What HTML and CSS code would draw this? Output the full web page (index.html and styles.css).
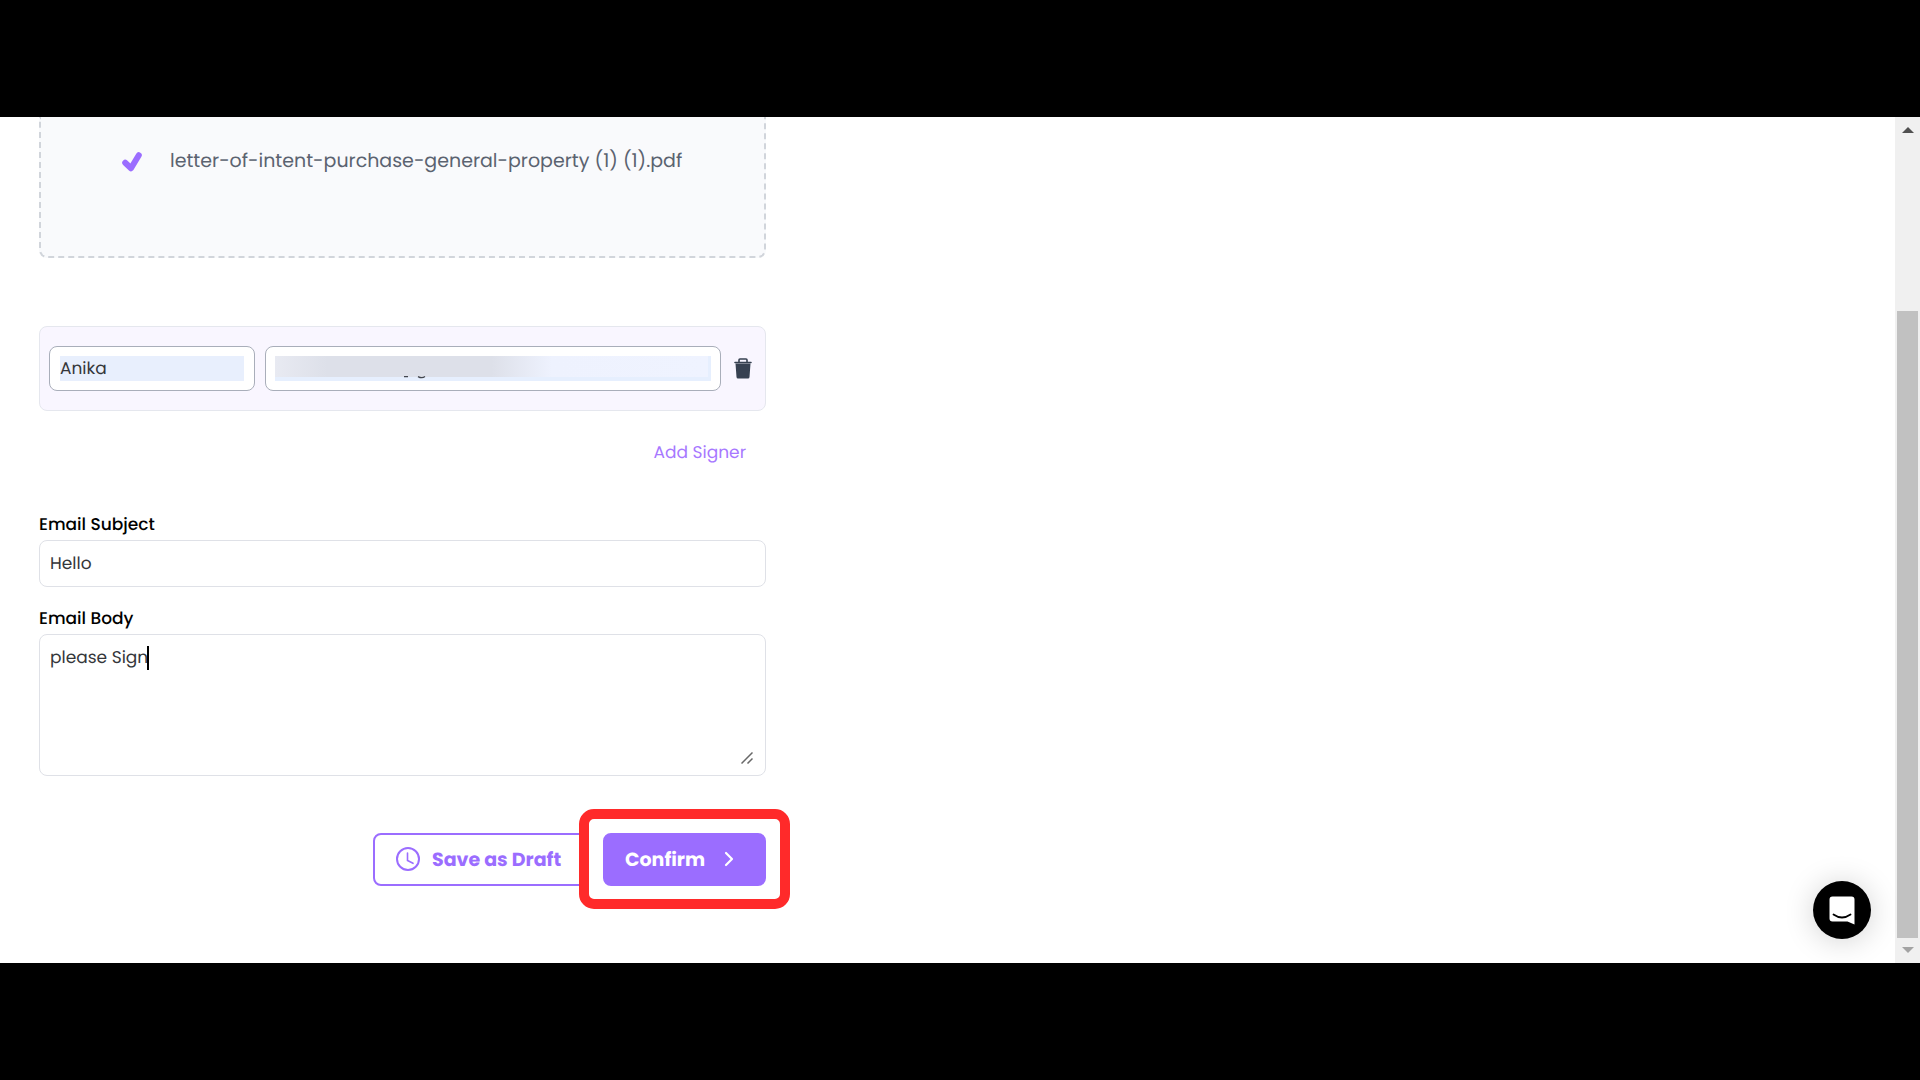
FILE: index.html
```html
<!DOCTYPE html>
<html lang="en">
<head>
<meta charset="utf-8">
<title>Send for signature</title>
<link rel="stylesheet" href="styles.css">
</head>
<body>
<div class="stage">
  <main class="content">
    <form class="form">
      <section class="dropzone">
        <svg class="check" width="20" height="20" viewBox="0 0 20 20" aria-hidden="true"><path d="M3.2 10.7 9 16.2 16.8 3.2" fill="none" stroke="#9b6dff" stroke-width="6" stroke-linecap="round" stroke-linejoin="round"/></svg>
        <span class="filename">letter-of-intent-purchase-general-property (1) (1).pdf</span>
      </section>

      <section class="signer">
        <div class="box box-dark name"><input class="autofill" type="text" value="Anika" aria-label="Signer name"></div>
        <div class="box box-dark email">
          <input class="autofill redacted" type="email" aria-label="Signer email">
          <svg class="descenders" width="24" height="3" viewBox="0 0 24 3" aria-hidden="true"><path d="M0 .6h4M14 .6q4 2.2 7 0" fill="none" stroke="#42464e" stroke-width="1.2"/></svg>
        </div>
        <button class="icon-button" type="button" aria-label="Remove signer">
          <svg width="18" height="21" viewBox="0 0 18 21" aria-hidden="true"><path d="M1 4.5h16M5 4V2q0-1 1-1h6q1 0 1 1v2" fill="none" stroke="#374151" stroke-width="1.6" stroke-linecap="round"/><path d="M1.500 5.5h15l-1 13.5q-.1 1.5-1.500 1.500h-10q-1.400 0-1.500-1.500z" fill="#374151"/></svg>
        </button>
      </section>

      <a class="add" href="#">Add Signer</a>

      <div class="field">
        <label for="subject">Email Subject</label>
        <div class="box"><input id="subject" type="text" value="Hello"></div>
      </div>
      <div class="field">
        <label for="body">Email Body</label>
        <div class="box body-box">
          <textarea id="body">please Sign</textarea>
          <span class="caret"></span>
          <svg class="grip" width="12" height="12" viewBox="0 0 12 12" aria-hidden="true"><path d="M.5 11.500 11.500.5M6.500 11.500l5-5" fill="none" stroke="#686868" stroke-width="1.500"/></svg>
        </div>
      </div>

      <div class="actions">
        <button class="btn outline" type="button">
          <svg width="24" height="24" viewBox="0 0 24 24" aria-hidden="true"><g fill="none" stroke="#9b6dff" stroke-linecap="round"><circle cx="12" cy="12" r="11" stroke-width="2"/><path d="M11.500 6v7.500l5.500 2.800" stroke-width="1.600"/></g></svg>
          Save as Draft
        </button>
        <div class="highlight">
          <button class="btn solid" type="submit">
            Confirm
            <svg width="12" height="16" viewBox="0 0 12 16" aria-hidden="true"><path d="M3 2l6 6-6 6" fill="none" stroke="#fff" stroke-width="2.200" stroke-linecap="round" stroke-linejoin="round"/></svg>
          </button>
        </div>
      </div>
    </form>
    <button class="chat" type="button" aria-label="Open chat">
      <svg width="26" height="29" viewBox="0 0 26 29" aria-hidden="true"><path d="M3.500.5h19q3 0 3 3v25l-7-3h-15q-3 0-3-3v-19q0-3 3-3z" fill="#fff"/><path d="M4.500 18.500q8.500 6 17 0" fill="none" stroke="#000" stroke-width="1.800" stroke-linecap="round"/></svg>
    </button>
  </main>
  <div class="scrollbar" aria-hidden="true">
    <svg width="12" height="6" viewBox="0 0 12 6"><path d="M6 0l6 6H0z" fill="#505050"/></svg>
    <div class="track"><div class="thumb"></div></div>
    <svg width="12" height="6" viewBox="0 0 12 6"><path d="M0 0h12L6 6z" fill="#a3a3a3"/></svg>
  </div>
</div>
</body>
</html>
```
FILE: styles.css
```css
* { box-sizing: border-box; }

body {
  margin: 0;
  min-height: 100vh;
  padding: 117px 0;
  display: flex;
  background: #000;
  color: #16171b;
  font-family: Poppins, Inter, "Open Sans", sans-serif;
  font-size: 17px;
  line-height: 25px;
  text-rendering: geometricPrecision;
}

svg { flex: none; }

.stage { flex: 1; display: flex; }

.content {
  position: relative;
  flex: 1;
  padding: 0 39px 53px;
  background: #fff;
}

.form {
  display: flex;
  flex-direction: column;
  max-width: 727px;
}

.dropzone {
  display: flex;
  align-items: flex-start;
  gap: 28px;
  height: 141px;
  padding: 31px 81px;
  border: 2px dashed #d1d5db;
  border-top: 0;
  border-radius: 0 0 8px 8px;
  background: #f9fafc;
}

.check { margin-top: 4px; }

.filename {
  color: #5b6370;
  font-size: 19px;
  white-space: nowrap;
}

.signer {
  display: flex;
  align-items: center;
  gap: 10px;
  height: 85px;
  margin-top: 68px;
  padding: 0 9px;
  border: 1px solid #e5e7ee;
  border-radius: 8px;
  background: #f9f6ff;
}

.box {
  position: relative;
  padding: 10px;
  border: 1px solid #dfe1e7;
  border-radius: 8px;
  background: #fff;
}

.box-dark { height: 45px; padding: 9px 10px; border-color: #a9aeba; }
.name { flex: 0 1 206px; }
.email { flex: 1; padding: 9px; }

input, textarea {
  display: block;
  width: 100%;
  height: 25px;
  margin: 0;
  padding: 0;
  border: 0;
  outline: 0;
  resize: none;
  background: none;
  color: #34363a;
  font: inherit;
  text-rendering: inherit;
}

.autofill { background: #e8effd; }

.redacted {
  background:
    linear-gradient(90deg, #e8eaf2, #dde0e9 12%, #dde0e9 50%, #eef2fe 64%, #eff3ff) 0 0 / 433px 21px no-repeat,
    #e6effe;
}

.descenders { position: absolute; left: 138px; bottom: 11px; }

.icon-button {
  display: flex;
  margin: 0 4px 0 3px;
  padding: 0;
  border: 0;
  background: none;
}

.add {
  align-self: flex-end;
  margin: 29px 20px 47px 0;
  color: #a778ff;
  text-decoration: none;
}

.field { margin-bottom: 19px; }

label {
  display: block;
  margin-bottom: 3px;
  color: #000;
  font-weight: 500;
}

.body-box { height: 142px; }
.body-box textarea { height: 100%; }

.caret {
  position: absolute;
  left: 107px;
  top: 11px;
  width: 2px;
  height: 24px;
  background: #000;
}

.grip { position: absolute; right: 12px; bottom: 11px; }

.actions {
  display: flex;
  justify-content: flex-end;
  align-items: center;
  height: 100px;
  margin: 14px -24px 0 0;
}

.btn {
  display: flex;
  align-items: center;
  height: 53px;
  border: 2px solid #9b6dff;
  border-radius: 8px;
  font: inherit;
  font-size: 19px;
  font-weight: 700;
  text-rendering: inherit;
  white-space: nowrap;
}

.outline {
  gap: 12px;
  width: 214px;
  margin-right: -8px;
  padding: 0 21px;
  background: #fff;
  color: #9b6dff;
}

.solid {
  gap: 18px;
  width: 163px;
  padding: 0 20px;
  background: #9b6dff;
  color: #fff;
}

.highlight {
  position: relative;
  display: flex;
  justify-content: center;
  align-items: center;
  width: 211px;
  height: 100px;
  border: 10px solid #ff2a2a;
  border-radius: 15px;
  background: #fff;
}

.chat {
  position: absolute;
  right: 24px;
  bottom: 24px;
  display: flex;
  justify-content: center;
  align-items: center;
  width: 58px;
  height: 58px;
  padding: 0;
  border: 0;
  border-radius: 50%;
  background: #000;
  box-shadow: 0 2px 30px rgba(0, 0, 0, .18);
}

.scrollbar {
  display: flex;
  flex-direction: column;
  align-items: center;
  gap: 9px;
  width: 25px;
  padding: 10px 2px;
  background: #f0f0f0;
}

.track {
  flex: 1;
  display: flex;
  align-items: flex-end;
  width: 21px;
}

.thumb { width: 100%; height: calc(79% - 2px); background: #c1c1c1; }
```
